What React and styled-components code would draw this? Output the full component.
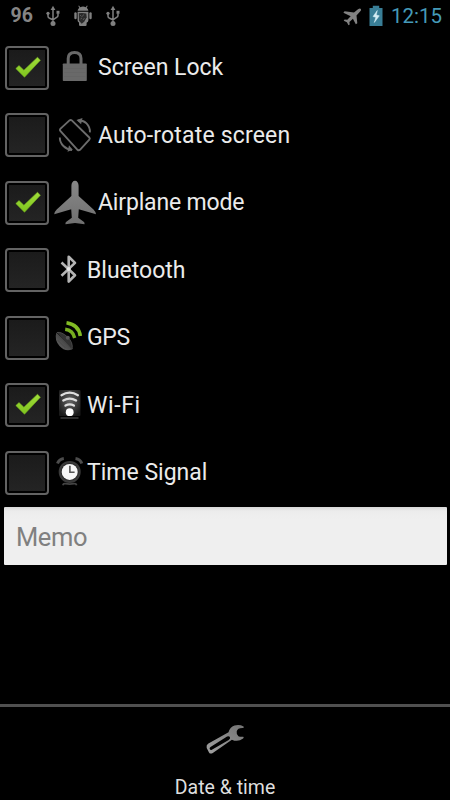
import React from 'react';
import styled, { createGlobalStyle } from 'styled-components';

const GlobalStyle = createGlobalStyle`
* {
    box-sizing: border-box;
}
body {
    margin: 0;
    background-color: #000;
    font-family: Roboto, "Noto Sans", sans-serif;
}
`;

const Screen = styled.div`
display: flex;
flex-direction: column;
width: 450px;
height: 800px;
overflow: hidden;
background-color: #000;
`;

const StatusBar = styled.header`
display: flex;
align-items: center;
justify-content: space-between;
height: 33.75px;
padding: 0 8px 1px 10.5px;
`;

const StatusGroup = styled.div`
display: flex;
align-items: center;
gap: ${props => props.$gap};
`;

const BatteryLevel = styled.span`
width: 21.5px;
font-size: 19.5px;
font-weight: 700;
line-height: 32px;
color: #858585;
`;

const Clock = styled.span`
width: 51px;
margin-left: 1px;
font-size: 20.5px;
line-height: 32px;
text-align: right;
white-space: nowrap;
color: #459ab8;
`;

const Icon = styled.svg`
display: block;
flex: none;
`;

const List = styled.main`
display: flex;
flex-direction: column;
`;

const Row = styled.label`
display: flex;
align-items: center;
height: 67.5px;
padding-left: 5px;
cursor: pointer;
`;

const Box = styled.span`
display: flex;
align-items: center;
justify-content: center;
width: 44px;
height: 44px;
margin-right: 5px;
padding: 2px;
border: 2px solid #636363;
border-radius: 4px;
background: linear-gradient(#1b1b1b, #242424) content-box, #000;
`;

const Label = styled.span`
padding: 1.5px 0 0 1px;
font-size: 23px;
line-height: 30px;
letter-spacing: ${props => props.$spacing || '0'};
white-space: nowrap;
color: #ebebeb;
`;

const Memo = styled.input`
width: 443px;
height: 58px;
margin: 0.75px 0 0 3.5px;
padding: 2px 0 0 12.5px;
border: 0;
border-radius: 1px;
outline: 0;
background: linear-gradient(#d8d8d8, #ececec 4px, #efefef 12px);
font-family: inherit;
font-size: 25.5px;
letter-spacing: -0.4px;
color: #222;
&::placeholder{
    color: #808080;
    opacity: 1;
}
`;

const Footer = styled.footer`
display: flex;
flex-direction: column;
align-items: center;
height: 96px;
margin-top: auto;
padding-top: 17px;
border-top: 3px solid #505050;
`;

const FooterLabel = styled.span`
margin-top: 21px;
font-size: 19.5px;
line-height: 24px;
white-space: nowrap;
color: #dedede;
`;

const UsbIcon = () => (
    <Icon width="14" height="22" viewBox="0 0 14 22" fill="none" stroke="#808080" strokeWidth="1.5">
        <path d="M7 4V17M2 9v2.2q0 1.6 1.6 2L7 14.8l3.6-2.4q1.4-.8 1.4-2V8.5" />
        <path d="M4.6 5L7 .8 9.4 5Z" fill="#808080" stroke="none" />
        <circle cx="7" cy="18.5" r="2.5" fill="#808080" stroke="none" />
        <circle cx="2" cy="8.3" r="1.6" fill="#808080" stroke="none" />
        <path d="M10.5 5.8h3v3h-3z" fill="#808080" stroke="none" />
    </Icon>
);

const DroidIcon = () => (
    <Icon width="18" height="22" viewBox="0 0 18 22" fill="#808080">
        <path d="M5 .5l1.3 1.7Q9 .9 11.7 2.2L13 .5l.7.5-1 1.7Q14.3 4 14.4 5.8H3.6Q3.7 4 5.3 2.7L4.3 1Z" />
        <path d="M3.6 6.8h10.8v8.400q0 1.800-1.800 2.500V20q0 1-1.200 1H6.200Q5 21 5 19.800v-2.400q-1.400-.5-1.400-2Z" />
        <rect x=".3" y="7.300" width="2.400" height="7" rx="1.200" />
        <rect x="15.300" y="7.300" width="2.400" height="7" rx="1.200" />
        <path d="M4.800 8.300q3.500-.8 7.500.2l.4 3.800-2.500 4.500-2.500 2-2.700-3Z" fill="#2b2b2b" />
        <path d="M6 10l1.500 1.500M9.500 9.500l-1 2M6.500 14l1.500-1M9 15l1.500-2" stroke="#606060" strokeWidth=".9" />
    </Icon>
);

const StatusPlane = () => (
    <Icon width="20" height="22" viewBox="0 0 20 22">
        <path d="M18.900 4q.8 1-.8 2.600L14.500 10.400 15.300 18.200 13.800 19.300 10.900 13.700 7.400 16.900 7.700 19.600 6.500 20.300 4.900 17.300 1.700 15.700 2.600 14.500 5.300 14.800 8.700 11.200 1.400 7.700 2.600 6.200 12 7.500 16 4.300Q18 3 18.900 4Z" fill="#828282" />
    </Icon>
);

const BatteryIcon = () => (
    <Icon width="14" height="22" viewBox="0 0 14 22">
        <path d="M.5 3h3.300V.8h6.400V3h3.300v18H.5Z" fill="#397e96" />
        <path d="M8.300 5.500L4 11.500l2.800.8-1.500 5.200 5-6.700-3-.8Z" fill="#d5edf4" stroke="#d5edf4" strokeWidth=".5" />
    </Icon>
);

const CheckMark = () => (
    <Icon width="28" height="24" viewBox="0 0 28 24">
        <defs>
            <linearGradient id="tick" x1="0" y1="0" x2="0" y2="1">
                <stop offset="0" stopColor="#a0dd3a" />
                <stop offset="1" stopColor="#7fc41e" />
            </linearGradient>
        </defs>
        <path d="M2.800 12.600L6 9.600l4.900 4.600L24.500 1.200l2.900 3.100L11.500 21.200Z" fill="url(#tick)" stroke="#72ad20" strokeWidth=".6" strokeLinejoin="round" />
    </Icon>
);

const LockIcon = () => (
    <Icon width="43" height="46" viewBox="0 0 43 46">
        <path d="M14.200 19v-5.500c0-3.800 2.500-6 6.400-6s6.400 2.200 6.400 6V19" fill="none" stroke="#696969" strokeWidth="3" />
        <rect x="8.800" y="18.500" width="24" height="17.500" rx=".8" fill="#696969" />
        <path d="M10 23.500h21.500M10 27.500h21.500M10 31.500h21.500" stroke="#646464" strokeWidth=".8" />
    </Icon>
);

const RotateIcon = () => (
    <Icon width="43" height="46" viewBox="0 0 43 46" fill="none" stroke="#6c6c6c" strokeWidth="1.900">
        <path d="M6.300 18.900Q5.400 17.900 6.300 16.900L15.500 8.400q1.200-1 2.300 0L35.300 25.500q1 1 0 2.100L26 37.800q-1.300 1.100-2.500 0Z" />
        <path d="M24 8.600q5-.8 8.500 2.800 3.800 4 3.400 8.900M5.800 25.500q0 5 3.600 8.500t8.700 4" />
        <path d="M28.500 6l-6 2 4.600 4.200ZM13.500 39.700l5.200-1.900-3.700-4.500Z" fill="#6c6c6c" stroke="none" />
    </Icon>
);

const PlaneIcon = () => (
    <Icon width="43" height="46" viewBox="0 0 43 46">
        <defs>
            <linearGradient id="plane" x1="0" y1="0" x2="0" y2="1">
                <stop offset="0" stopColor="#888" />
                <stop offset="1" stopColor="#707070" />
            </linearGradient>
        </defs>
        <path d="M21 .8c2.100 0 3.600 2 3.600 5v10.300L39.500 29.500q2.500 2.600 2.500 4.700L24.800 29.300 24.200 37.700 30 42q.8.800.5 2.200L21 43.100 11.500 44.200Q11.200 42.800 12 42l5.800-4.300-.6-8.400L.2 34.200q0-2.100 2.500-4.700L17.400 16.100V5.800c0-3 1.500-5 3.600-5Z" fill="url(#plane)" />
    </Icon>
);

const BluetoothIcon = () => (
    <Icon width="32" height="46" viewBox="0 0 32 46">
        <path d="M7.500 15.500L21 28.300l-6.300 6.200V9.800l6.300 6.100L7.500 28.800" fill="none" stroke="#b4b4b4" strokeWidth="2.600" strokeLinejoin="round" />
        <circle cx="14.700" cy="22" r="2" fill="#e8e8e8" />
    </Icon>
);

const GpsIcon = () => (
    <Icon width="32" height="46" viewBox="0 0 32 46">
        <defs>
            <linearGradient id="dish" x1="0" y1="1" x2="1" y2="0">
                <stop offset="0" stopColor="#686868" />
                <stop offset="1" stopColor="#292929" />
            </linearGradient>
        </defs>
        <path d="M2.300 17.500Q.2 25 5.500 31t12.500 3.600q1.500-1.400-.5-2.600Z" fill="url(#dish)" />
        <path d="M3 17.500q4.500-1 10.500 4.500T18 34.200" fill="#333" stroke="#505050" strokeWidth=".8" />
        <path d="M5 21l10 11M3.500 25l8 8" stroke="#484848" />
        <circle cx="13.800" cy="22.700" r="2" fill="#555" />
        <path d="M11.200 14.300q7.700.8 9.500 8.700" fill="none" stroke="#77ad20" strokeWidth="3.400" />
        <path d="M12.500 7.800Q24.800 9.800 26.300 21" fill="none" stroke="#82bb24" strokeWidth="3.600" />
    </Icon>
);

const WifiIcon = () => (
    <Icon width="32" height="46" viewBox="0 0 32 46">
        <defs>
            <radialGradient id="glow" cx=".5" cy=".4" r=".65">
                <stop offset="0" stopColor="#666" />
                <stop offset=".55" stopColor="#3c3c3c" />
                <stop offset="1" stopColor="#1a1a1a" />
            </radialGradient>
        </defs>
        <rect x="5" y="8" width="21.500" height="26" rx="1" fill="url(#glow)" />
        <path d="M6.500 36h18" stroke="#3d3d3d" strokeWidth="1.500" />
        <g fill="none" stroke="#dedede" strokeWidth="2.300" strokeLinecap="round">
            <path d="M7.500 13.200q8.200-5 16.400 0" />
            <path d="M9.300 18.500q6.400-3.800 12.800 0" />
            <path d="M11.500 23.600q4.200-2.300 8.400 0" />
        </g>
        <circle cx="15.700" cy="30.200" r="3.900" fill="#fff" />
    </Icon>
);

const AlarmIcon = () => (
    <Icon width="32" height="46" viewBox="0 0 32 46" fill="none">
        <path d="M3.500 13.500q1.500-4.400 6.300-5.100M21.500 8.400q4.800.7 6.300 5.100" stroke="#4c4c4c" strokeWidth="3" />
        <path d="M8.800 35.200q.6-2 2.500-1.500 4.400.9 8.800 0 1.900-.5 2.500 1.500" stroke="#444" strokeWidth="1.700" />
        <circle cx="15.700" cy="21.900" r="10" fill="#2b2b2b" stroke="#3a3a3a" strokeWidth="2" />
        <circle cx="15.700" cy="21.900" r="8" fill="#f7f7f7" />
        <path d="M15.900 15.800v6.400h4.700" stroke="#555" strokeWidth="1.600" />
    </Icon>
);

const WrenchIcon = () => (
    <Icon width="40" height="31" viewBox="0 0 40 31">
        <defs>
            <linearGradient id="wrench" x1="0" y1="1" x2="1" y2="0">
                <stop offset="0" stopColor="#a0a0a0" />
                <stop offset="1" stopColor="#747474" />
            </linearGradient>
        </defs>
        <path
            fill="url(#wrench)"
            fillRule="evenodd"
            d="M3 19.800L23.500 8.300Q24.800 3 29.500 1.500q4.900-1.300 9.100.9.800 1.100-.6 1.700-5.500-.2-6.300 3.400-.5 3.400 1.700 4.800 2.300.8 4.900.4 1 .7-.2 1.900-5.200 3.900-11.200 1.100L7.800 29.100Q5.200 30.400 4 28.400L1.700 24Q1 21.200 3 19.800ZM5.500 22.900q-1.300.8-.8 2 .7 1.600 2.200.8L23.700 15.900q2-1.300 1.200-2.800-1-1.500-2.800-.5Z"
        />
    </Icon>
);

const settings = [
    { name: 'Screen Lock', icon: LockIcon, checked: true, spacing: '0px' },
    { name: 'Auto-rotate screen', icon: RotateIcon, spacing: '0.18px' },
    { name: 'Airplane mode', icon: PlaneIcon, checked: true, spacing: '-0.16px' },
    { name: 'Bluetooth', icon: BluetoothIcon, spacing: '0px' },
    { name: 'GPS', icon: GpsIcon, spacing: '-0.4px' },
    { name: 'Wi-Fi', icon: WifiIcon, checked: true, spacing: '0.6px' },
    { name: 'Time Signal', icon: AlarmIcon, spacing: '0px' },
];

const Setting = ({ name, icon: Glyph, checked, spacing }) => (
    <Row>
        <Box>{checked && <CheckMark />}</Box>
        <Glyph />
        <Label $spacing={spacing}>{name}</Label>
    </Row>
);

export default function App() {
    return (
        <>
            <GlobalStyle />
            <Screen>
                <StatusBar>
                    <StatusGroup $gap="14px">
                        <BatteryLevel>96</BatteryLevel>
                        <UsbIcon />
                        <DroidIcon />
                        <UsbIcon />
                    </StatusGroup>
                    <StatusGroup $gap="7px">
                        <StatusPlane />
                        <BatteryIcon />
                        <Clock>12:15</Clock>
                    </StatusGroup>
                </StatusBar>
                <List>
                    {settings.map(item => <Setting key={item.name} {...item} />)}
                    <Memo placeholder="Memo" />
                </List>
                <Footer>
                    <WrenchIcon />
                    <FooterLabel>Date &amp; time</FooterLabel>
                </Footer>
            </Screen>
        </>
    );
}
